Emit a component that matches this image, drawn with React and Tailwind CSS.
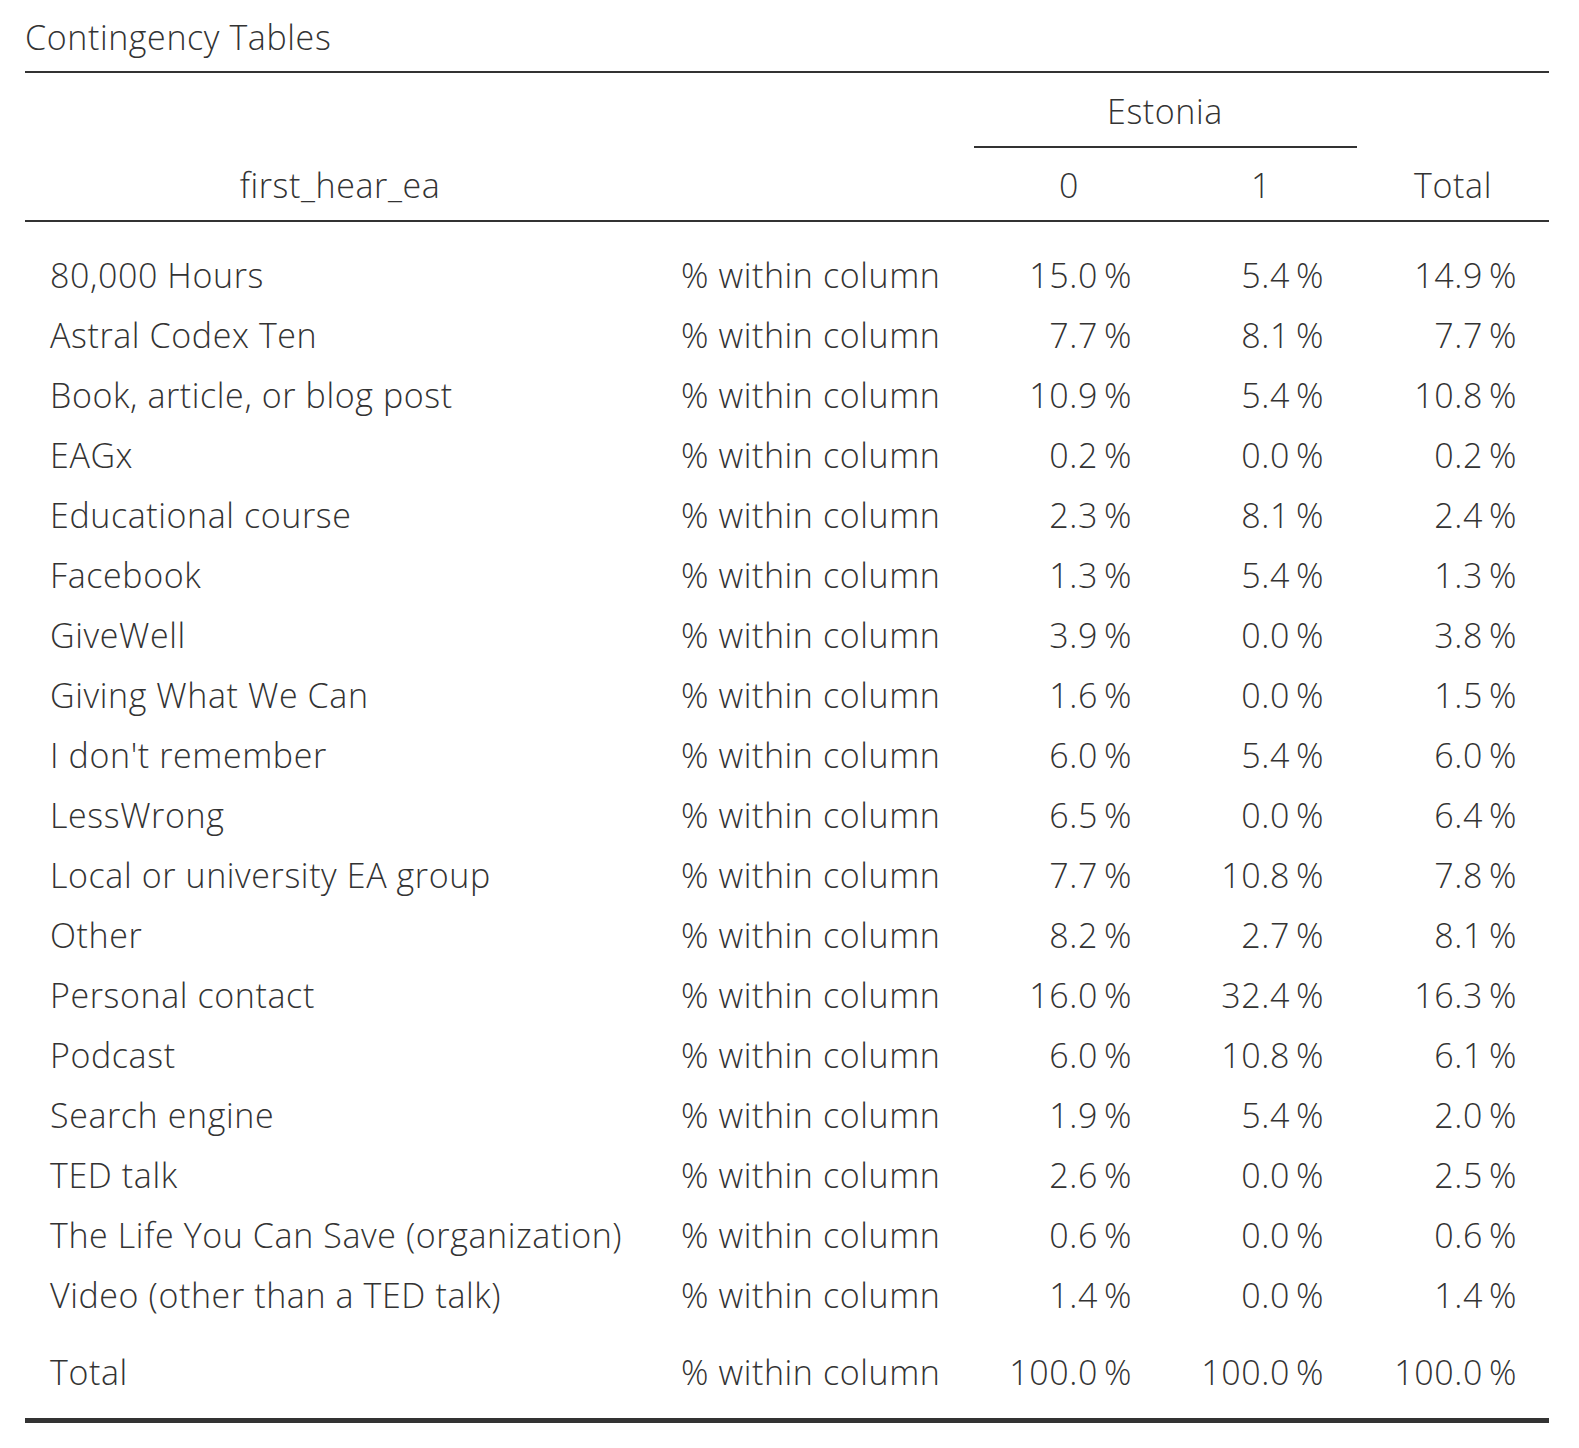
const rows = [
  ["80,000 Hours", "15.0", "5.4", "14.9"],
  ["Astral Codex Ten", "7.7", "8.1", "7.7"],
  ["Book, article, or blog post", "10.9", "5.4", "10.8"],
  ["EAGx", "0.2", "0.0", "0.2"],
  ["Educational course", "2.3", "8.1", "2.4"],
  ["Facebook", "1.3", "5.4", "1.3"],
  ["GiveWell", "3.9", "0.0", "3.8"],
  ["Giving What We Can", "1.6", "0.0", "1.5"],
  ["I don't remember", "6.0", "5.4", "6.0"],
  ["LessWrong", "6.5", "0.0", "6.4"],
  ["Local or university EA group", "7.7", "10.8", "7.8"],
  ["Other", "8.2", "2.7", "8.1"],
  ["Personal contact", "16.0", "32.4", "16.3"],
  ["Podcast", "6.0", "10.8", "6.1"],
  ["Search engine", "1.9", "5.4", "2.0"],
  ["TED talk", "2.6", "0.0", "2.5"],
  ["The Life You Can Save (organization)", "0.6", "0.0", "0.6"],
  ["Video (other than a TED talk)", "1.4", "0.0", "1.4"],
];

function Pct({ v }) {
  return (
    <>
      {v}
      <span className="ml-[6px]">%</span>
    </>
  );
}

function Row({ label, a, b, c }) {
  return (
    <div className="grid h-[60px] grid-cols-[630px_318px_192px_192px_192px] items-center">
      <div className="pl-[25px] whitespace-nowrap">{label}</div>
      <div className="pl-[26px] whitespace-nowrap">% within column</div>
      <div className="pr-[33px] text-right"><Pct v={a} /></div>
      <div className="pr-[33px] text-right"><Pct v={b} /></div>
      <div className="pr-[32px] text-right"><Pct v={c} /></div>
    </div>
  );
}

export default function App() {
  return (
    <div
      className="min-h-screen bg-white pl-[25px] pr-[30px] text-[34px] font-[350] tracking-[0.6px] text-[#333333]"
      style={{ fontFamily: '"Open Sans", "Noto Sans", sans-serif' }}
    >
      <div className="flex h-[71px] items-center pt-[4px] whitespace-nowrap">Contingency Tables</div>
      <div className="border-t-2 border-[#333333]">
        {/* header */}
        <div className="flex border-b-2 border-[#333333]">
          <div className="flex w-[948px] items-end">
            <div className="flex h-[72px] w-[630px] items-center justify-center pt-[3px]">first_hear_ea</div>
          </div>
          <div className="flex w-[384px] flex-col">
            <div className="flex h-[73px] items-center justify-center pt-[4px]">Estonia</div>
            <div className="ml-[1px] border-t-2 border-[#333333]" />
            <div className="flex h-[72px] pt-[3px]">
              <div className="flex w-[192px] items-center justify-center">0</div>
              <div className="flex w-[192px] items-center justify-center">1</div>
            </div>
          </div>
          <div className="flex w-[192px] items-end">
            <div className="flex h-[72px] w-full items-center justify-center pt-[3px]">Total</div>
          </div>
        </div>
        {/* body */}
        <div className="pt-[23px]">
          {rows.map((r) => (
            <Row key={r[0]} label={r[0]} a={r[1]} b={r[2]} c={r[3]} />
          ))}
        </div>
        <div className="pt-[17px] pb-[16px]">
          <Row label="Total" a="100.0" b="100.0" c="100.0" />
        </div>
        <div className="border-t-[5px] border-[#333333]" />
      </div>
    </div>
  );
}
